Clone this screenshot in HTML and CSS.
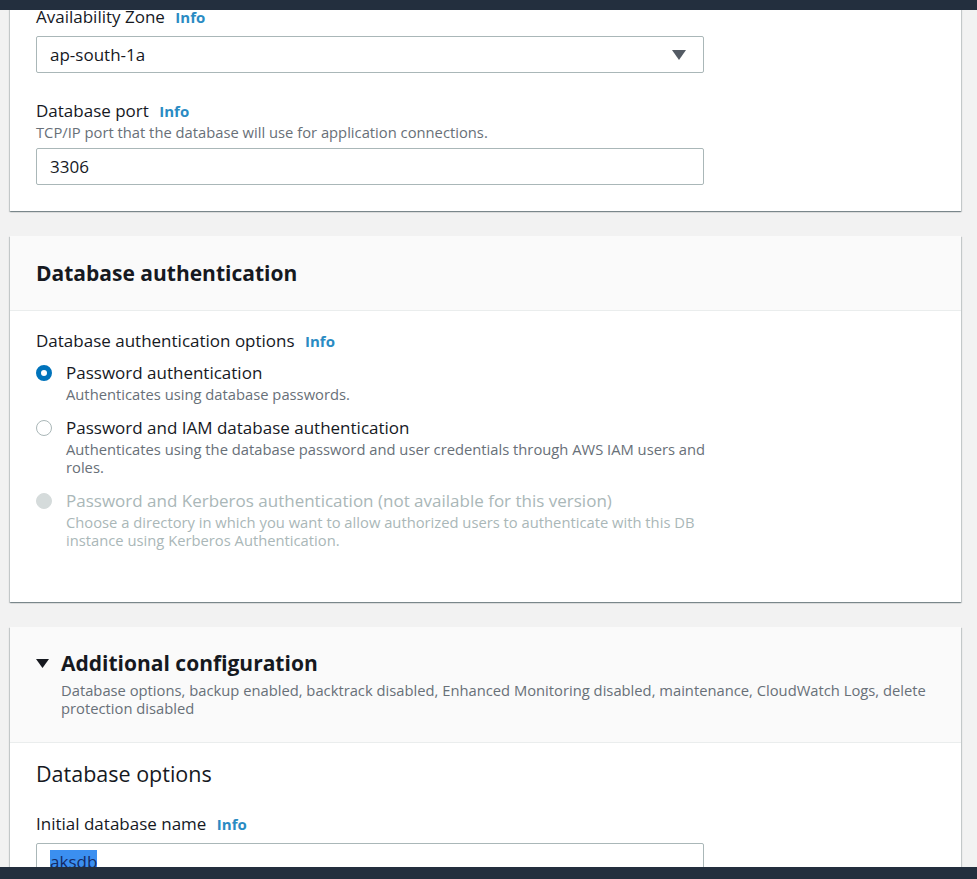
FILE: index.html
```html
<!DOCTYPE html>
<html lang="en">
<head>
<meta charset="utf-8">
<title>Create database</title>
<link rel="stylesheet" href="styles.css">
</head>
<body>
<div class="topbar"></div>
<main class="page">
  <section class="card card-first">
    <div class="card-body tight">
      <div class="field">
        <div class="label">Availability Zone <a class="info">Info</a></div>
        <div class="control select">
          <span>ap-south-1a</span>
          <svg class="caret" width="14" height="10" viewBox="0 0 14 10"><path d="M0 0H14L7 10Z" fill="#545b64"/></svg>
        </div>
      </div>
      <div class="field">
        <div class="label">Database port <a class="info">Info</a></div>
        <div class="desc">TCP/IP port that the database will use for application connections.</div>
        <div class="control">3306</div>
      </div>
    </div>
  </section>

  <section class="card">
    <header class="card-head">
      <h2 class="card-title">Database authentication</h2>
    </header>
    <div class="card-body auth">
      <div class="label">Database authentication options <a class="info">Info</a></div>
      <div class="radios">
        <div class="radio">
          <span class="dot checked"></span>
          <div>
            <div class="radio-label">Password authentication</div>
            <div class="desc">Authenticates using database passwords.</div>
          </div>
        </div>
        <div class="radio">
          <span class="dot"></span>
          <div>
            <div class="radio-label">Password and IAM database authentication</div>
            <div class="desc">Authenticates using the database password and user credentials through AWS IAM users and roles.</div>
          </div>
        </div>
        <div class="radio disabled">
          <span class="dot"></span>
          <div>
            <div class="radio-label">Password and Kerberos authentication (not available for this version)</div>
            <div class="desc">Choose a directory in which you want to allow authorized users to authenticate with this DB instance using Kerberos Authentication.</div>
          </div>
        </div>
      </div>
    </div>
  </section>

  <section class="card">
    <header class="card-head expand">
      <div class="expand-row">
        <svg class="toggle" width="13" height="9" viewBox="0 0 13 9"><path d="M0 0H13L6.5 9Z" fill="#16191f"/></svg>
        <div>
          <h2 class="card-title">Additional configuration</h2>
          <div class="desc wide">Database options, backup enabled, backtrack disabled, Enhanced Monitoring disabled, maintenance, CloudWatch Logs, delete protection disabled</div>
        </div>
      </div>
    </header>
    <div class="card-body opts">
      <h3 class="sub-title">Database options</h3>
      <div class="field">
        <div class="label">Initial database name <a class="info">Info</a></div>
        <div class="control"><span class="selected">aksdb</span></div>
      </div>
    </div>
  </section>
</main>
<div class="bottombar"></div>
</body>
</html>
```

FILE: styles.css
```css
html, body {
  margin: 0;
  padding: 0;
  overflow: hidden;
  height: 100%;
}
body {
  background: #f2f2f2;
  font-family: "Open Sans", "Liberation Sans", sans-serif;
  color: #16191f;
}
.topbar {
  position: fixed;
  top: 0;
  left: 0;
  right: 0;
  height: 10px;
  background: #232f3e;
  z-index: 10;
}
.bottombar {
  position: fixed;
  bottom: 0;
  left: 0;
  right: 0;
  height: 12px;
  background: #232f3e;
  z-index: 10;
}
.page {
  padding: 0 16px 0 10px;
  display: flex;
  flex-direction: column;
  gap: 25px;
}
.card {
  background: #fff;
  box-shadow: 0 1px 1px 0 rgba(0, 28, 36, 0.3), 1px 1px 1px 0 rgba(0, 28, 36, 0.15), -1px 1px 1px 0 rgba(0, 28, 36, 0.15);
}
.card-head {
  background: #fafafa;
  border-bottom: 1px solid #eaeded;
  padding: 23px 26px;
}
.card-title {
  margin: 0;
  font-size: 21px;
  line-height: 28px;
  font-weight: 700;
}
.card-body {
  padding: 19px 26px 26px;
}
.card-body.tight {
  padding-top: 6px;
}
.field {
  display: flex;
  flex-direction: column;
}
.field + .field {
  margin-top: 27px;
}
.label {
  font-size: 17px;
  line-height: 22px;
  margin-bottom: 8px;
}
.label + .desc {
  margin-top: -7px;
  margin-bottom: 7px;
}
.info {
  color: #2a8bc3;
  font-weight: 700;
  font-size: 15px;
  margin-left: 6px;
}
.desc {
  font-size: 14.75px;
  line-height: 18px;
  color: #687078;
}
.control {
  width: 668px;
  box-sizing: border-box;
  height: 37px;
  border: 1px solid #aab7b8;
  border-radius: 2px;
  padding: 0 13px;
  display: flex;
  align-items: center;
  font-size: 17px;
}
.select {
  justify-content: space-between;
  padding-right: 17px;
}
.auth {
  padding-bottom: 53px;
}
.radios {
  display: flex;
  flex-direction: column;
  gap: 14px;
  padding-top: 2px;
}
.radio {
  display: flex;
  gap: 14px;
  align-items: flex-start;
}
.radio .desc {
  margin-top: 1px;
  max-width: 640px;
}
.radio-label {
  font-size: 17px;
  line-height: 22px;
}
.dot {
  flex: none;
  width: 16px;
  height: 16px;
  margin-top: 3px;
  border-radius: 50%;
  box-sizing: border-box;
  border: 1px solid #aab7b8;
  background: #fff;
}
.dot.checked {
  border: 5px solid #0073bb;
}
.disabled .dot {
  border-color: #d5dbdb;
  background: #d5dbdb;
}
.disabled .radio-label,
.disabled .desc {
  color: #aab7b8;
}
.expand {
  padding: 22px 26px 25px 26px;
}
.expand-row {
  display: flex;
  gap: 12px;
  align-items: flex-start;
}
.toggle {
  margin-top: 10px;
  flex: none;
}
.desc.wide {
  margin-top: 4px;
}
.opts {
  padding-top: 17px;
}
.sub-title {
  margin: 0 0 25px;
  font-size: 21.5px;
  line-height: 28px;
  font-weight: 400;
}
.selected {
  background: #3b8ff0;
  color: #142a66;
}
```
